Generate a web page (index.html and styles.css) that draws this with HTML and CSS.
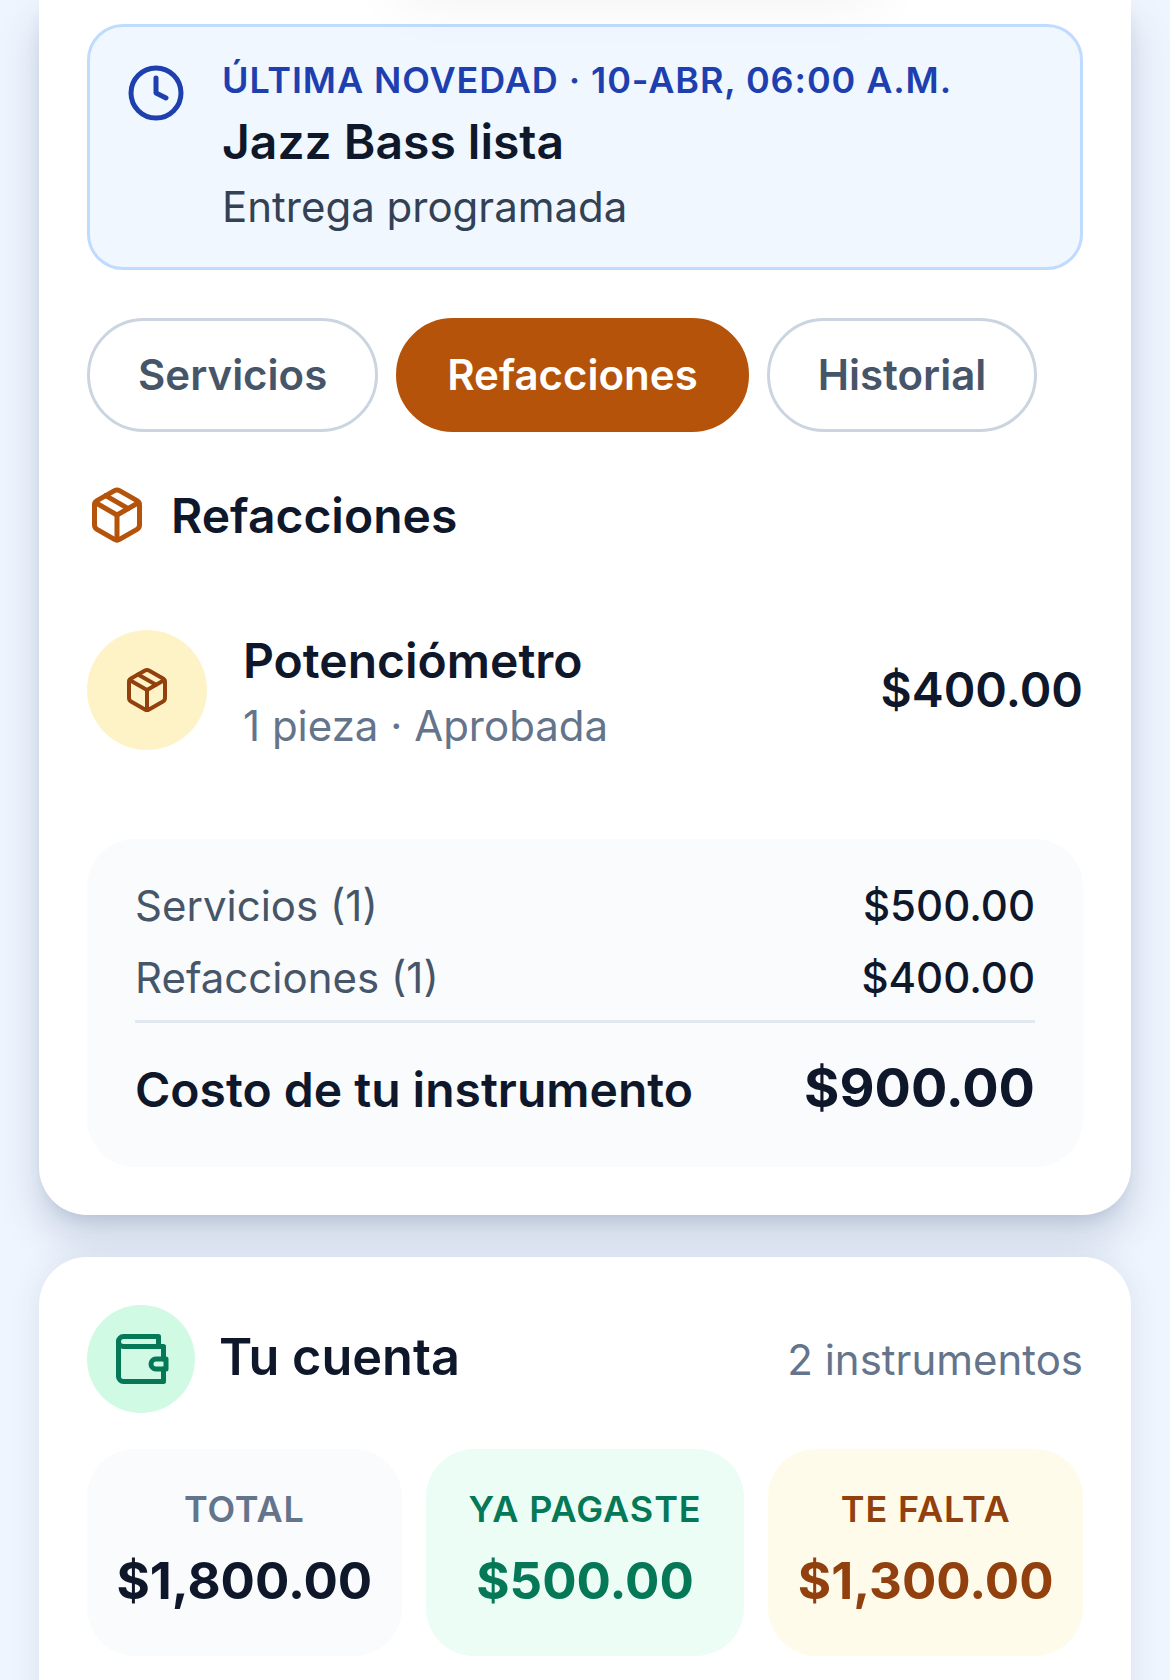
FILE: index.html
```html
<!DOCTYPE html>
<html lang="es">
<head>
    <meta charset="UTF-8">
    <meta name="viewport" content="width=device-width, initial-scale=1.0">
    <title>Tu instrumento</title>
    <link rel="stylesheet" href="styles.css">
</head>
<body>
    <section class="card card-top">
        <div class="notice">
            <svg class="icon icon-clock" viewBox="0 0 24 24"><circle cx="12" cy="12" r="10"/><polyline points="12 6 12 12 16 14"/></svg>
            <div>
                <div class="notice-label">ÚLTIMA NOVEDAD · 10-ABR, 06:00 A.M.</div>
                <div class="notice-title">Jazz Bass lista</div>
                <div class="notice-sub">Entrega programada</div>
            </div>
        </div>
        <div class="top-shade"></div>

        <div class="tabs">
            <div class="tab">Servicios</div>
            <div class="tab active">Refacciones</div>
            <div class="tab">Historial</div>
        </div>

        <h2 class="section-title">
            <svg class="icon icon-package" viewBox="0 0 24 24"><path d="m7.5 4.27 9 5.15"/><path d="M21 8a2 2 0 0 0-1-1.73l-7-4a2 2 0 0 0-2 0l-7 4A2 2 0 0 0 3 8v8a2 2 0 0 0 1 1.73l7 4a2 2 0 0 0 2 0l7-4A2 2 0 0 0 21 16Z"/><path d="m3.3 7 8.7 5 8.7-5"/><path d="M12 22V12"/></svg>
            Refacciones
        </h2>

        <div class="item">
            <div class="item-badge">
                <svg class="icon icon-small" viewBox="0 0 24 24"><path d="m7.5 4.27 9 5.15"/><path d="M21 8a2 2 0 0 0-1-1.73l-7-4a2 2 0 0 0-2 0l-7 4A2 2 0 0 0 3 8v8a2 2 0 0 0 1 1.73l7 4a2 2 0 0 0 2 0l7-4A2 2 0 0 0 21 16Z"/><path d="m3.3 7 8.7 5 8.7-5"/><path d="M12 22V12"/></svg>
            </div>
            <div class="item-info">
                <div class="item-name">Potenciómetro</div>
                <div class="item-meta">1 pieza · Aprobada</div>
            </div>
            <div class="item-price">$400.00</div>
        </div>

        <div class="summary">
            <div class="summary-row"><span>Servicios (1)</span><strong>$500.00</strong></div>
            <div class="summary-row"><span>Refacciones (1)</span><strong>$400.00</strong></div>
            <div class="summary-total"><span>Costo de tu instrumento</span><strong>$900.00</strong></div>
        </div>
    </section>

    <section class="card card-account">
        <div class="account-head">
            <div class="account-badge">
                <svg class="icon icon-wallet" viewBox="0 0 24 24"><path d="M21 12V7H5a2 2 0 0 1 0-4h14v4"/><path d="M3 5v14a2 2 0 0 0 2 2h16v-5"/><path d="M18 12a2 2 0 0 0 0 4h4v-4Z"/></svg>
            </div>
            <h2 class="account-title">Tu cuenta</h2>
            <div class="account-count">2 instrumentos</div>
        </div>
        <div class="stats">
            <div class="stat stat-total"><div class="stat-label">TOTAL</div><div class="stat-value">$1,800.00</div></div>
            <div class="stat stat-paid"><div class="stat-label">YA PAGASTE</div><div class="stat-value">$500.00</div></div>
            <div class="stat stat-due"><div class="stat-label">TE FALTA</div><div class="stat-value">$1,300.00</div></div>
        </div>
    </section>
</body>
</html>
```

FILE: styles.css
```css
html, body {
    height: 1680px;
    overflow: hidden;
}
body {
    margin: 0;
    padding: 0 39px;
    font-family: Inter, "Liberation Sans", sans-serif;
    color: #0f172a;
    background-color: #eff5fe;
}
h2 {
    margin: 0;
}
.card {
    position: relative;
    background-color: #fff;
    padding: 0 48px;
    box-shadow: 0 24px 42px rgba(30, 58, 100, 0.18), 0 9px 18px -6px rgba(30, 58, 100, 0.14);
}
.card-top {
    padding-top: 24px;
    padding-bottom: 48px;
    border-radius: 0 0 48px 48px;
}
.card-account {
    margin-top: 42px;
    padding-top: 48px;
    height: 420px;
    border-radius: 48px 48px 0 0;
    box-shadow: 0 0 30px rgba(30, 58, 100, 0.1);
}
.icon {
    display: block;
    flex-shrink: 0;
    fill: none;
    stroke-width: 2;
    stroke-linecap: round;
    stroke-linejoin: round;
}

/* notice */
.notice {
    display: flex;
    gap: 36px;
    padding: 29px 36px 33px;
    border: 3px solid #bfdbfe;
    border-radius: 36px;
    background-color: #f0f7ff;
}
.icon-clock {
    width: 60px;
    height: 60px;
    margin-top: 7px;
    stroke: #1e40af;
}
.notice-label {
    font-size: 36px;
    line-height: 48px;
    font-weight: 600;
    letter-spacing: 0.9px;
    color: #1e40af;
}
.notice-title {
    margin-top: 5px;
    font-size: 48px;
    line-height: 66px;
    font-weight: 600;
}
.notice-sub {
    margin-top: 5px;
    font-size: 42px;
    line-height: 54px;
    color: #334155;
}
.top-shade {
    position: absolute;
    top: -60px;
    left: 360px;
    width: 480px;
    height: 60px;
    box-shadow: 0 0 60px rgba(15, 23, 42, 0.06);
    pointer-events: none;
}

/* tabs */
.tabs {
    display: flex;
    gap: 18px;
    margin-top: 48px;
}
.tab {
    padding: 0 48px;
    height: 108px;
    line-height: 108px;
    border: 3px solid #cbd5e1;
    border-radius: 60px;
    font-size: 42px;
    font-weight: 600;
    color: #475569;
}
.tab.active {
    background-color: #b45309;
    border-color: #b45309;
    color: #fff;
}

/* section */
.section-title {
    display: flex;
    align-items: center;
    gap: 24px;
    margin-top: 53px;
    font-size: 48px;
    font-weight: 600;
}
.icon-package {
    width: 60px;
    height: 60px;
    stroke: #b45309;
}
.item {
    display: flex;
    align-items: center;
    gap: 36px;
    margin-top: 78px;
}
.item-badge {
    display: flex;
    align-items: center;
    justify-content: center;
    width: 120px;
    height: 120px;
    border-radius: 50%;
    background-color: #fef3c7;
}
.icon-small {
    width: 48px;
    height: 48px;
    stroke: #92400e;
}
.item-info {
    flex: 1;
    padding-top: 8px;
}
.item-name {
    font-size: 48px;
    line-height: 60px;
    font-weight: 600;
}
.item-meta {
    margin-top: 5px;
    font-size: 42px;
    line-height: 60px;
    color: #64748b;
}
.item-price {
    font-size: 48px;
    font-weight: 600;
}

/* summary */
.summary {
    margin-top: 83px;
    padding: 37px 48px 36px;
    border-radius: 48px;
    background-color: #f9fbfd;
}
.summary-row {
    display: flex;
    justify-content: space-between;
    font-size: 42px;
    line-height: 60px;
    color: #475569;
}
.summary-row + .summary-row {
    margin-top: 12px;
}
.summary-row strong {
    font-weight: 500;
    color: #0f172a;
}
.summary-total {
    display: flex;
    justify-content: space-between;
    align-items: center;
    margin-top: 12px;
    padding-top: 26px;
    border-top: 3px solid #e2e8f0;
    font-size: 48px;
    line-height: 82px;
    font-weight: 600;
}
.summary-total strong {
    padding-bottom: 4px;
    font-size: 54px;
    line-height: 78px;
    font-weight: 700;
}

/* account */
.account-head {
    display: flex;
    align-items: center;
    gap: 24px;
}
.account-badge {
    display: flex;
    align-items: center;
    justify-content: center;
    width: 108px;
    height: 108px;
    border-radius: 50%;
    background-color: #d1fae5;
}
.icon-wallet {
    width: 60px;
    height: 60px;
    stroke: #047857;
}
.account-title {
    flex: 1;
    padding-bottom: 6px;
    font-size: 50.4px;
    font-weight: 600;
}
.account-count {
    font-size: 42px;
    color: #64748b;
}
.stats {
    display: grid;
    grid-template-columns: 314fr 318fr 314fr;
    gap: 24px;
    margin-top: 36px;
}
.stat {
    height: 207px;
    padding-top: 33px;
    box-sizing: border-box;
    border-radius: 48px;
    text-align: center;
}
.stat-label {
    font-size: 36px;
    line-height: 54px;
    font-weight: 600;
    letter-spacing: 0.9px;
}
.stat-value {
    margin-top: 12px;
    font-size: 51px;
    line-height: 66px;
    font-weight: 700;
}
.stat-total {
    background-color: #f9fbfd;
}
.stat-total .stat-label {
    color: #64748b;
}
.stat-paid {
    background-color: #ecfdf5;
    color: #047857;
}
.stat-due {
    background-color: #fffbeb;
    color: #92400e;
}
```
